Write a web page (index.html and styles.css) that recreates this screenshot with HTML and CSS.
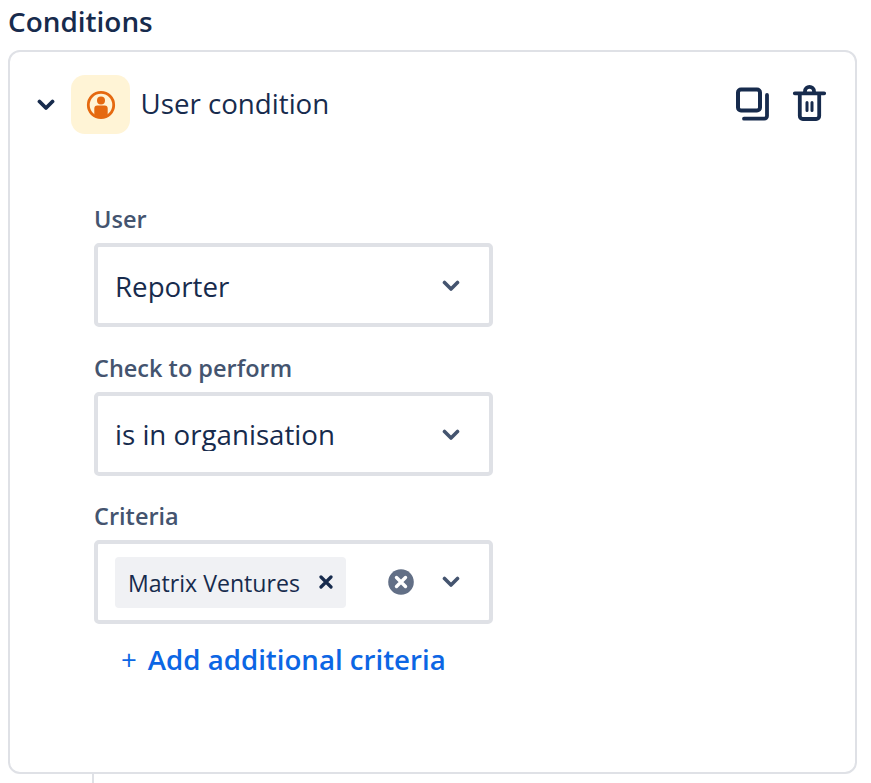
FILE: index.html
```html
<!DOCTYPE html>
<html lang="en">
<head>
<meta charset="utf-8">
<title>Conditions</title>
<link rel="stylesheet" href="styles.css">
</head>
<body>
<h2 class="title">Conditions</h2>
<section class="card">
  <header class="card-head">
    <svg class="chev-main" viewBox="0 0 18 12" width="18" height="12"><path d="M2.500 2.500 9 9l6.500-6.500" fill="none" stroke="#172b4d" stroke-width="3.800" stroke-linecap="round" stroke-linejoin="round"/></svg>
    <span class="cond-icon">
      <svg viewBox="0 0 30 30" width="30" height="30"><circle cx="15" cy="15" r="12.700" fill="none" stroke="#e56910" stroke-width="2.800"/><circle cx="15" cy="10.400" r="4" fill="#e56910"/><path d="M8.300 25v-6.500a3 3 0 0 1 3-3h7.400a3 3 0 0 1 3 3V25a12.500 12.500 0 0 1-13.400 0z" fill="#e56910"/></svg>
    </span>
    <span class="cond-name">User condition</span>
    <span class="actions">
      <svg class="action-icon" viewBox="0 0 36 36" width="36" height="36"><rect x="3" y="3.500" width="22" height="21" rx="3" fill="none" stroke="#172b4d" stroke-width="4"/><path d="M32 9v21a2.700 2.700 0 0 1-2.700 2.700H9" fill="none" stroke="#172b4d" stroke-width="3.800" stroke-linecap="round"/></svg>
      <svg class="action-icon" viewBox="0 -1.500 36 36" width="36" height="36"><path d="M2.800 5.800h29.400M13 5.800v-2a4.500 4.500 0 0 1 9 0v2M7.800 5.800V28.500a3 3 0 0 0 3 3h13.400a3 3 0 0 0 3-3V5.800" fill="none" stroke="#172b4d" stroke-width="3.800" stroke-linecap="round"/><path d="M15 15v8M20 15v8" fill="none" stroke="#172b4d" stroke-width="3" stroke-linecap="round"/></svg>
    </span>
  </header>
  <div class="fields">
    <div class="field">
      <label class="label">User</label>
      <div class="select">
        <span class="value">Reporter</span>
        <svg class="chev" viewBox="0 -1 18 12" width="18" height="12"><path d="M2.500 2.500 9 9l6.500-6.500" fill="none" stroke="#44546f" stroke-width="3.600" stroke-linecap="round" stroke-linejoin="round"/></svg>
      </div>
    </div>
    <div class="field">
      <label class="label">Check to perform</label>
      <div class="select">
        <span class="value">is in organisation</span>
        <svg class="chev" viewBox="0 -1 18 12" width="18" height="12"><path d="M2.500 2.500 9 9l6.500-6.500" fill="none" stroke="#44546f" stroke-width="3.600" stroke-linecap="round" stroke-linejoin="round"/></svg>
      </div>
    </div>
    <div class="field">
      <label class="label">Criteria</label>
      <div class="select">
        <span class="chip">
          <span class="chip-text">Matrix Ventures</span>
          <svg viewBox="0 0 14 14" width="14" height="14"><path d="M2 2l10 10M12 2 2 12" stroke="#172b4d" stroke-width="3.200" stroke-linecap="round"/></svg>
        </span>
        <svg class="clear" viewBox="0 0 26 26" width="26" height="26"><circle cx="13" cy="13" r="12.800" fill="#626f86"/><path d="M8.500 8.500l9 9M17.500 8.500l-9 9" stroke="#fff" stroke-width="3.400" stroke-linecap="round"/></svg>
        <svg class="chev" viewBox="0 0 18 12" width="18" height="12"><path d="M2.500 2.500 9 9l6.500-6.500" fill="none" stroke="#44546f" stroke-width="3.600" stroke-linecap="round" stroke-linejoin="round"/></svg>
      </div>
    </div>
    <a class="add" href="#"><span class="plus">+</span>Add additional criteria</a>
  </div>
</section>
<div class="connector"></div>
</body>
</html>
```
FILE: styles.css
```css
* { box-sizing: border-box; }
html, body { margin: 0; height: 783px; overflow: hidden; background: #fff; }
body { padding: 0 14px 0 8px; font-family: "Open Sans", "Noto Sans", sans-serif; color: #172b4d; }
.title { margin: 0; height: 50px; font-size: 27.900px; line-height: 42px; font-weight: 600; }
.card { height: 724px; border: 2px solid #dfe1e6; border-radius: 12px; }
.card-head { display: flex; align-items: center; height: 59px; margin-top: 23px; padding: 0 27px; }
.chev-main { flex: none; }
.cond-icon { display: flex; align-items: center; justify-content: center; width: 59px; height: 59px; margin-left: 16px; border-radius: 14px; background: #fff4d6; }
.cond-name { margin: -3px 0 0 10.500px; font-size: 27.700px; }
.actions { display: flex; gap: 21px; margin: -2px 0 0 auto; }
.action-icon { overflow: visible; }
.fields { padding: 69px 0 0 84px; }
.field { width: 399px; margin-bottom: 24.500px; }
.label { display: block; height: 40px; font-size: 23.500px; line-height: 32px; font-weight: 600; color: #44546f; }
.select { display: flex; align-items: center; height: 84px; padding: 0 29px 0 17px; border: 4px solid #dfe1e6; border-radius: 5px; }
.value { flex: 1; height: 32px; margin-top: 3px; overflow: hidden; font-size: 27.700px; line-height: 31px; }
.chip { display: flex; align-items: center; justify-content: space-between; width: 231px; height: 51px; padding: 0 13px; border-radius: 4px; background: #f0f1f4; }
.chip-text { margin-top: 2px; font-size: 23.100px; }
.clear { margin-left: auto; margin-right: 28.500px; }
.add { display: block; margin: -8.500px 0 0 27px; font-size: 27.650px; font-weight: 600; color: #0c66e4; text-decoration: none; }
.plus { margin-right: 11px; font-weight: 400; }
.connector { width: 2px; height: 9px; margin-left: 84px; background: #dfe1e6; }
```
